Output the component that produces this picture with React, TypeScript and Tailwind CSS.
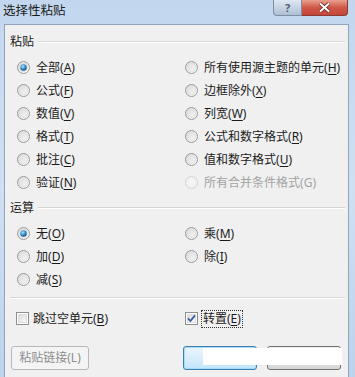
import React from "react";

// --------------------
// Types
// --------------------
type Opt = {
  label: string;
  key: string;
  tail?: string;
  checked?: boolean;
  disabled?: boolean;
};

// --------------------
// Data
// --------------------
const pasteLeft: Opt[] = [
  { label: "全部", key: "A", checked: true },
  { label: "公式", key: "F" },
  { label: "数值", key: "V" },
  { label: "格式", key: "T" },
  { label: "批注", key: "C" },
  { label: "验证", key: "N" },
];

const pasteRight: Opt[] = [
  { label: "所有使用源主题的单元", key: "H" },
  { label: "边框除外", key: "X" },
  { label: "列宽", key: "W" },
  { label: "公式和数字格式", key: "R" },
  { label: "值和数字格式", key: "U" },
  { label: "所有合并条件格式", key: "G", disabled: true },
];

const opLeft: Opt[] = [
  { label: "无", key: "O", checked: true },
  { label: "加", key: "D" },
  { label: "减", key: "S" },
];

const opRight: Opt[] = [
  { label: "乘", key: "M" },
  { label: "除", key: "I" },
];

// --------------------
// Small parts
// --------------------
function Radio({ checked, disabled }: { checked?: boolean; disabled?: boolean }) {
  return (
    <svg width="13" height="13" viewBox="0 0 13 13" className="shrink-0">
      <defs>
        <linearGradient id="rfill" x1="0" y1="0" x2="1" y2="1">
          <stop offset="0" stopColor="#d8d8d8" />
          <stop offset="1" stopColor="#fbfbfb" />
        </linearGradient>
        <radialGradient id="rdot" cx="0.4" cy="0.35" r="0.7">
          <stop offset="0" stopColor="#b6e3fb" />
          <stop offset="0.55" stopColor="#2f8fce" />
          <stop offset="1" stopColor="#0c3f73" />
        </radialGradient>
      </defs>
      <circle
        cx="6.5"
        cy="6.5"
        r="6"
        fill={disabled ? "#f4f4f4" : "url(#rfill)"}
        stroke={disabled ? "#d0d0d0" : "#9a9a9a"}
      />
      <circle cx="6.5" cy="6.5" r="4" fill="none" stroke={disabled ? "#eeeeee" : "#e2e2e2"} />
      {checked && <circle cx="6.5" cy="6.5" r="3.2" fill="url(#rdot)" />}
    </svg>
  );
}

function Check({ checked }: { checked?: boolean }) {
  return (
    <svg width="13" height="13" viewBox="0 0 13 13" className="shrink-0">
      <defs>
        <linearGradient id="cfill" x1="0" y1="0" x2="1" y2="1">
          <stop offset="0" stopColor="#d9d9d9" />
          <stop offset="1" stopColor="#fbfbfb" />
        </linearGradient>
      </defs>
      <rect x="0.5" y="0.5" width="12" height="12" fill="#ffffff" stroke="#8f8f8f" />
      <rect x="2.5" y="2.5" width="8" height="8" fill="url(#cfill)" stroke="#dedede" />
      {checked && (
        <path
          d="M3 6.4 L5.4 9 L10 3.4"
          fill="none"
          stroke="#3c57a6"
          strokeWidth="1.8"
          strokeLinejoin="round"
        />
      )}
    </svg>
  );
}

function Label({ o }: { o: Opt }) {
  return (
    <span className={o.disabled ? "text-[#a3a3a3]" : "text-[#1b1b1b]"}>
      {o.label}(
      <span className={o.disabled ? "" : "underline underline-offset-2"}>{o.key}</span>)
    </span>
  );
}

function RadioRow({ o }: { o: Opt }) {
  return (
    <div className="flex h-[23px] items-center gap-[6px]">
      <Radio checked={o.checked} disabled={o.disabled} />
      <Label o={o} />
    </div>
  );
}

function Heading({ text }: { text: string }) {
  return (
    <div className="flex h-4 items-center gap-[4px] pr-[3px]">
      <span className="text-[#1b1b1b]">{text}</span>
      <div className="h-[2px] flex-1 border-t border-b border-t-[#d5d5d5] border-b-white" />
    </div>
  );
}

// --------------------
// Component
// --------------------
export default function App() {
  return (
    <div className="relative h-[377px] w-[355px] overflow-hidden bg-gradient-to-b from-[#c2d7ee] via-[#cfe0f2] to-[#bcd3ec] font-['Noto_Sans','Noto_Sans_CJK_SC',sans-serif] text-[12px] leading-4">
      {/* Title bar */}
      <div className="flex h-[24px] items-start">
        <div className="pl-[3px] pt-[3px] text-[12.5px] text-[#1a1a1a]">选择性粘贴</div>
        <div className="ml-auto mr-[7px] flex">
          <div className="flex h-[16px] w-[29px] items-center justify-center rounded-bl-[4px] border border-t-0 border-[#7d8fa5] bg-gradient-to-b from-[#dfe8f3] to-[#aebfd4] text-[11px] font-bold leading-none text-[#4e5e75]">
            ?
          </div>
          <div className="flex h-[16px] w-[46px] items-center justify-center rounded-br-[4px] border border-l-0 border-t-0 border-[#8a3b35] bg-gradient-to-b from-[#e8a08f] via-[#cf5848] to-[#c4453a]">
            <svg width="13" height="11" viewBox="0 0 13 11">
              <path d="M2 1.5 L11 9.5 M11 1.5 L2 9.5" stroke="#5a2520" strokeWidth="3.6" />
              <path d="M2 1.5 L11 9.5 M11 1.5 L2 9.5" stroke="#ffffff" strokeWidth="2" />
            </svg>
          </div>
        </div>
      </div>

      {/* Client area */}
      <div className="ml-[4px] mr-[6px] h-[360px] border border-b-0 border-[#8fa4bd] bg-[#f0f0f0] pl-[5px] pt-[9px]">
        <Heading text="粘贴" />
        <div className="mt-[6px] grid grid-cols-[168px_1fr] pl-[7px]">
          <div className="flex flex-col">
            {pasteLeft.map((o) => (
              <RadioRow key={o.key} o={o} />
            ))}
          </div>
          <div className="flex flex-col">
            {pasteRight.map((o) => (
              <RadioRow key={o.key} o={o} />
            ))}
          </div>
        </div>

        <div className="mt-[6px]">
          <Heading text="运算" />
        </div>
        <div className="mt-[6px] grid grid-cols-[168px_1fr] pl-[7px]">
          <div className="flex flex-col">
            {opLeft.map((o) => (
              <RadioRow key={o.key} o={o} />
            ))}
          </div>
          <div className="flex flex-col">
            {opRight.map((o) => (
              <RadioRow key={o.key} o={o} />
            ))}
          </div>
        </div>

        <div className="mr-[3px] mt-[6px] h-[2px] border-t border-b border-t-[#d5d5d5] border-b-white" />

        <div className="mt-[8px] grid h-[23px] grid-cols-[169px_1fr] items-center pl-[6px]">
          <div className="flex items-center gap-[4px]">
            <Check />
            <span className="text-[#1b1b1b]">
              跳过空单元(<span className="underline underline-offset-2">B</span>)
            </span>
          </div>
          <div className="flex items-center gap-[3px]">
            <Check checked />
            <span className="border border-dotted border-[#333] px-[1px] text-[#1b1b1b]">
              转置(<span className="underline underline-offset-2">E</span>)
            </span>
          </div>
        </div>

        <div className="mt-[16px] flex items-center pl-[1px]">
          <div className="flex h-[24px] w-[78px] items-center justify-center rounded-[3px] border border-[#b5b9bc] bg-[#f4f4f4] text-[#8d8d8d]">
            粘贴链接(L)
          </div>
          <div className="ml-[94px] flex h-[24px] w-[74px] items-center justify-center rounded-[3px] border border-[#3c7fb1] bg-gradient-to-b from-[#eaf6fd] via-[#d9eefa] to-[#bee6fd] shadow-[inset_0_0_0_1px_#a6dcf5] text-[#1b1b1b]">
            确定
          </div>
          <div className="ml-[10px] flex h-[24px] w-[74px] items-center justify-center rounded-[3px] border border-[#707070] bg-gradient-to-b from-[#f2f2f2] via-[#ebebeb] to-[#d4d4d4] text-[#1b1b1b]">
            取消
          </div>
        </div>
      </div>

      {/* white cover over button captions, as in the capture */}
      <div className="absolute left-[203px] top-[348px] h-[17px] w-[139px] bg-white" />
    </div>
  );
}
